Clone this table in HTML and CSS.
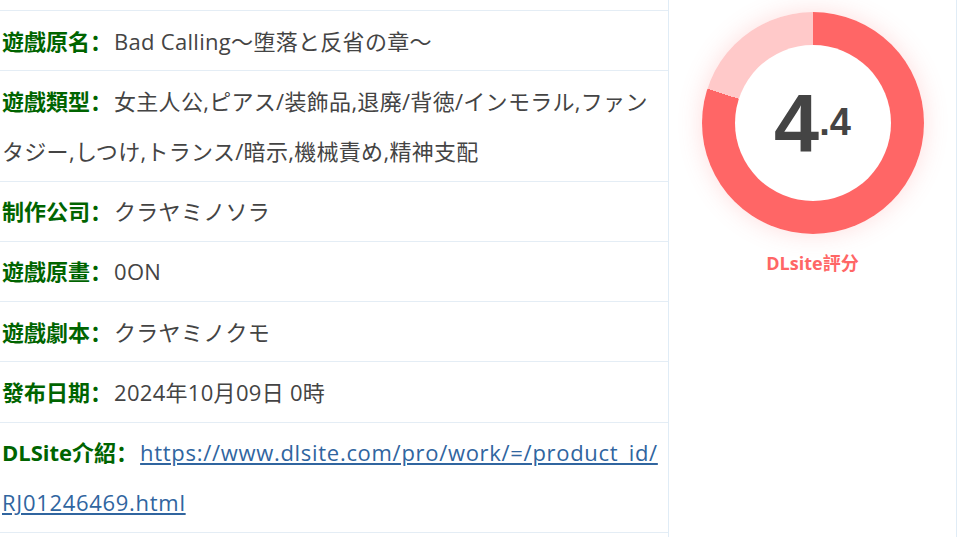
FILE: index.html
```html
<!DOCTYPE html>
<html lang="zh-CN">
<head>
<meta charset="utf-8">
<title>遊戲資訊</title>
<link rel="stylesheet" href="styles.css">
</head>
<body>
<div class="page">
  <div class="info">
    <div class="row row-cut"></div>
    <div class="row"><span class="label">遊戲原名：</span><span class="value">Bad Calling～堕落と反省の章～</span></div>
    <div class="row"><span class="label">遊戲類型：</span><span class="value">女主人公,ピアス/装飾品,退廃/背徳/インモラル,ファンタジー,しつけ,トランス/暗示,機械責め,精神支配</span></div>
    <div class="row"><span class="label">制作公司：</span><span class="value">クラヤミノソラ</span></div>
    <div class="row"><span class="label">遊戲原畫：</span><span class="value">0ON</span></div>
    <div class="row"><span class="label">遊戲劇本：</span><span class="value">クラヤミノクモ</span></div>
    <div class="row"><span class="label">發布日期：</span><span class="value">2024年10月09日 0時</span></div>
    <div class="row"><span class="label">DLSite介紹：</span><a class="link" href="#">https://www.dlsite.com/pro/work/=/product_id/<wbr>RJ01246469.html</a></div>
  </div>
  <div class="side">
    <div class="donut">
      <div class="donut-hole">
        <span class="score-main">4</span><span class="score-dec">.4</span>
      </div>
    </div>
    <div class="score-label">DLsite評分</div>
  </div>
</div>
</body>
</html>
```

FILE: styles.css
```css
html, body {
  margin: 0;
  padding: 0;
  background: #ffffff;
}

body {
  font-family: "Open Sans", "Noto Sans CJK SC", sans-serif;
  color: #444444;
}

.page {
  display: flex;
  align-items: stretch;
  height: 537px;
  overflow: hidden;
}

.info {
  width: 668px;
  flex: none;
}

.row {
  border-bottom: 1px solid #e4edf5;
  padding: 4.65px 4px 4.65px 2px;
  font-size: 22px;
  line-height: 50px;
}

.row-cut {
  height: 10px;
  padding: 0;
}

.label {
  color: #006400;
  font-weight: bold;
  margin-right: 2px;
}

.value {
  color: #444444;
  letter-spacing: 0.3px;
}

.link {
  color: #30659f;
  text-decoration: underline;
  letter-spacing: 0.7px;
}

.side {
  width: 287px;
  flex: none;
  border-left: 1px solid #e0ecf6;
  border-right: 1px solid #e0ecf6;
  display: flex;
  flex-direction: column;
  align-items: center;
  padding-top: 12px;
}

.donut {
  width: 222px;
  height: 222px;
  border-radius: 50%;
  background: conic-gradient(#ff6666 0 80%, #ffc9c9 80% 100%);
  box-shadow: 0 0 24px rgba(255, 102, 102, 0.22);
  display: flex;
  align-items: center;
  justify-content: center;
}

.donut-hole {
  width: 156px;
  height: 156px;
  border-radius: 50%;
  background: #ffffff;
  display: flex;
  align-items: center;
  justify-content: center;
  font-family: "Liberation Sans", Arial, sans-serif;
  font-weight: bold;
  color: #444444;
}

.score-main {
  font-size: 81px;
  line-height: 1;
}

.score-dec {
  font-size: 38px;
  line-height: 1;
  margin-top: -2px;
}

.score-label {
  margin-top: 15px;
  color: #ff6666;
  font-weight: bold;
  font-size: 18px;
  font-family: "Open Sans", "Noto Sans CJK SC", sans-serif;
}
```
